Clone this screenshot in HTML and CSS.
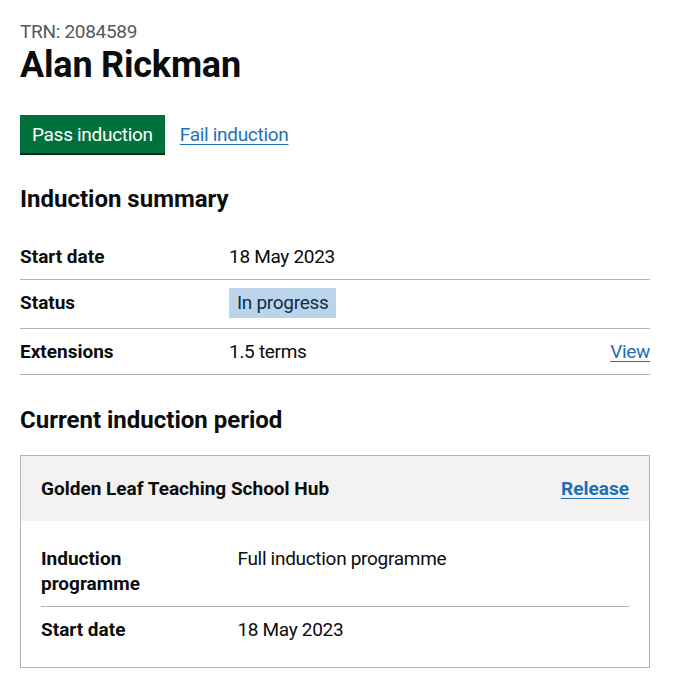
FILE: index.html
```html
<!DOCTYPE html>
<html lang="en">
<head>
<meta charset="utf-8">
<title>Alan Rickman</title>
<link rel="stylesheet" href="styles.css">
</head>
<body>
<main class="page">
  <span class="caption">TRN: 2084589</span>
  <h1 class="heading-l">Alan Rickman</h1>

  <div class="button-group">
    <a class="button" href="#">Pass induction</a>
    <a class="link" href="#">Fail induction</a>
  </div>

  <h2 class="heading-m">Induction summary</h2>
  <dl class="summary-list">
    <div class="row">
      <dt class="key">Start date</dt>
      <dd class="value">18 May 2023</dd>
      <dd class="actions"></dd>
    </div>
    <div class="row">
      <dt class="key">Status</dt>
      <dd class="value"><strong class="tag">In progress</strong></dd>
      <dd class="actions"></dd>
    </div>
    <div class="row">
      <dt class="key">Extensions</dt>
      <dd class="value">1.5 terms</dd>
      <dd class="actions"><a class="link" href="#">View</a></dd>
    </div>
  </dl>

  <h2 class="heading-m">Current induction period</h2>
  <div class="card">
    <div class="card-title">
      <h3 class="card-heading">Golden Leaf Teaching School Hub</h3>
      <a class="link bold" href="#">Release</a>
    </div>
    <div class="card-content">
      <dl class="summary-list in-card">
        <div class="row">
          <dt class="key">Induction programme</dt>
          <dd class="value">Full induction programme</dd>
        </div>
        <div class="row">
          <dt class="key">Start date</dt>
          <dd class="value">18 May 2023</dd>
        </div>
      </dl>
    </div>
  </div>
</main>
</body>
</html>
```

FILE: styles.css
```css
* { box-sizing: border-box; }
html, body { margin: 0; padding: 0; background: #fff; }
body {
  font-family: Roboto, "Liberation Sans", Arial, sans-serif;
  color: #0b0c0c;
  font-size: 19px;
  line-height: 25px;
  letter-spacing: -0.3px;
}
.page {
  padding: 19px 38px 0 20px;
}
.caption {
  display: block;
  color: #505a5f;
  font-size: 19px;
  line-height: 25px;
  margin-bottom: 1px;
}
.heading-l {
  font-size: 36px;
  line-height: 40px;
  font-weight: 700;
  letter-spacing: -0.2px;
  margin: 0 0 30px;
}
.heading-m {
  font-size: 24px;
  line-height: 30px;
  font-weight: 700;
  letter-spacing: 0;
  margin: 0 0 20px;
}
.button-group {
  display: flex;
  align-items: baseline;
  gap: 15px;
  margin-bottom: 29px;
}
.button {
  display: inline-block;
  background: #00703c;
  color: #fff;
  text-decoration: none;
  font-size: 19px;
  line-height: 19px;
  padding: 8px 10px 7px;
  border: 2px solid transparent;
  box-shadow: 0 2px 0 #002d18;
  margin-bottom: 2px;
}
.link {
  color: #1d70b8;
  text-decoration: underline;
  text-decoration-thickness: 1px;
  text-underline-offset: 0.16em;
}
.bold { font-weight: 700; letter-spacing: 0; }
.summary-list {
  margin: 0 0 30px;
}
.row {
  display: grid;
  grid-template-columns: calc(30% + 20px) 1fr auto;
  border-bottom: 1px solid #b1b4b6;
}
.key, .value, .actions {
  margin: 0;
  padding: 10px 20px 10px 0;
}
.key { font-weight: 700; letter-spacing: 0; }
.actions { padding-right: 0; text-align: right; }
.tag {
  display: inline-block;
  font-weight: 400;
  background: #bbd4ea;
  color: #0c2d4a;
  padding: 2px 8px 3px;
  margin: -2px 0 0;
}
.card {
  border: 1px solid #b1b4b6;
  margin-bottom: 20px;
}
.card-title {
  display: flex;
  justify-content: space-between;
  align-items: baseline;
  background: #f3f2f1;
  padding: 20px;
}
.card-heading {
  margin: 0;
  font-size: 19px;
  line-height: 25px;
  font-weight: 700;
  letter-spacing: 0;
}
.card-content {
  padding: 15px 20px;
}
.summary-list.in-card { margin: 0; }
.in-card .row { grid-template-columns: calc(30% + 20px) 1fr; }
.in-card .row:last-child { border-bottom: none; }
```
